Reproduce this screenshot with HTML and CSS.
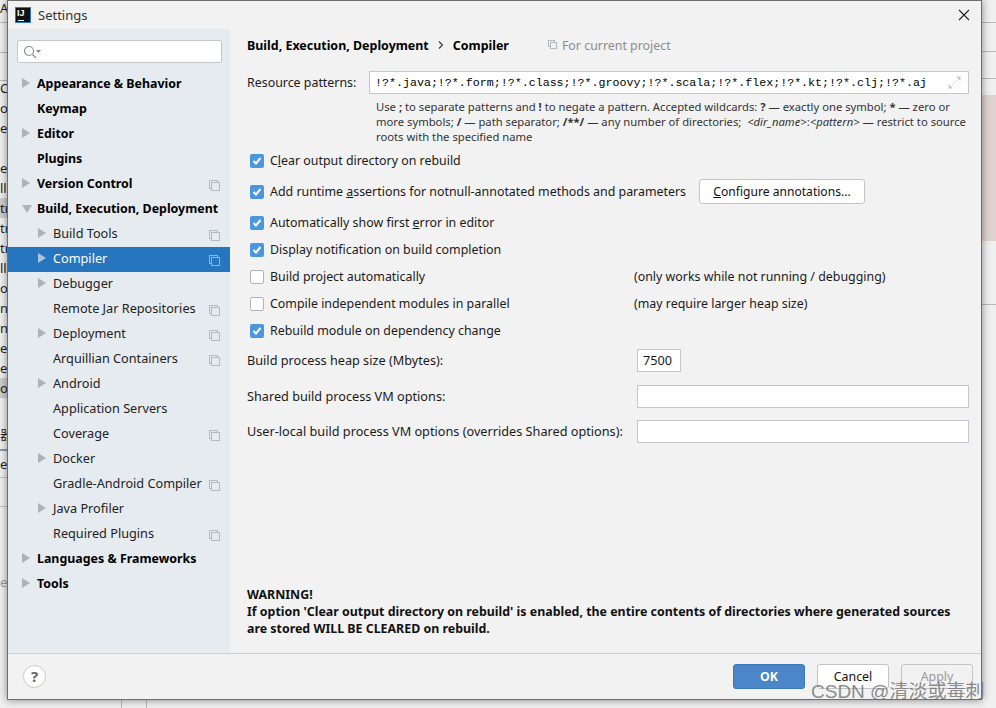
FILE: index.html
```html
<!DOCTYPE html>
<html lang="en">

  <head>
    <meta charset="UTF-8">
    <meta name="viewport" content="width=device-width, initial-scale=1.0">
    <title>Settings</title>

    <link rel="stylesheet" href="styles.css">
  </head>

  <body>

    <!-- the app behind the dialog, only its edges show -->
    <div class="bg-left">
      <span class="bg-row">A</span>
      <span class="bg-row"></span>
      <span class="bg-row"></span>
      <span class="bg-row"></span>
      <span class="bg-row">Co</span>
      <span class="bg-row">o</span>
      <span class="bg-row">er</span>
      <span class="bg-row"></span>
      <span class="bg-row">er</span>
      <span class="bg-row">lle</span>
      <span class="bg-row picked">tr</span>
      <span class="bg-row">tr</span>
      <span class="bg-row">tr</span>
      <span class="bg-row">ll</span>
      <span class="bg-row">o</span>
      <span class="bg-row">n</span>
      <span class="bg-row">nt</span>
      <span class="bg-row">e</span>
      <span class="bg-row">e</span>
      <span class="bg-row picked">o</span>
      <span class="bg-row cn">器</span>
      <span class="bg-row es1">e</span>
      <span class="bg-row es2">es</span>
    </div>
    <div class="bg-right"></div>
    <div class="bg-slot"></div>

    <div class="dialog">

      <header class="titlebar">
        <span class="app-logo">IJ</span>
        <span class="title">Settings</span>
        <svg class="close" width="12" height="12" viewBox="0 0 12 12"><path d="M1 1L11 11M11 1L1 11" stroke="#222" stroke-width="1.1" fill="none"/></svg>
      </header>

      <div class="main">

        <aside class="sidebar">
          <div class="search">
            <svg width="20" height="16" viewBox="0 0 20 16"><circle cx="7" cy="7" r="4.5" fill="none" stroke="#8a8a8a" stroke-width="1.1"/><path d="M10.5 10.5L14 14" stroke="#8a8a8a" stroke-width="1.2"/><path d="M14 6h5l-2.5 3z" fill="#8a8a8a"/></svg>
          </div>
          <ul class="tree">
            <li class="row top"><i class="arrow"></i>Appearance &amp; Behavior</li>
            <li class="row top">Keymap</li>
            <li class="row top"><i class="arrow"></i>Editor</li>
            <li class="row top">Plugins</li>
            <li class="row top copy"><i class="arrow"></i>Version Control</li>
            <li class="row top"><i class="arrow open"></i>Build, Execution, Deployment</li>
            <li class="row sub copy"><i class="arrow"></i>Build Tools</li>
            <li class="row sub copy selected"><i class="arrow"></i>Compiler</li>
            <li class="row sub"><i class="arrow"></i>Debugger</li>
            <li class="row sub copy">Remote Jar Repositories</li>
            <li class="row sub copy"><i class="arrow"></i>Deployment</li>
            <li class="row sub copy">Arquillian Containers</li>
            <li class="row sub"><i class="arrow"></i>Android</li>
            <li class="row sub">Application Servers</li>
            <li class="row sub copy">Coverage</li>
            <li class="row sub"><i class="arrow"></i>Docker</li>
            <li class="row sub copy">Gradle-Android Compiler</li>
            <li class="row sub"><i class="arrow"></i>Java Profiler</li>
            <li class="row sub copy">Required Plugins</li>
            <li class="row top"><i class="arrow"></i>Languages &amp; Frameworks</li>
            <li class="row top"><i class="arrow"></i>Tools</li>
          </ul>
        </aside>

        <section class="content">

          <div class="crumbs">
            <b>Build, Execution, Deployment</b>
            <svg width="6" height="8" viewBox="0 0 6 8"><path d="M1 0.5L4.5 4L1 7.5" stroke="#333" stroke-width="1.1" fill="none"/></svg>
            <b>Compiler</b>
            <span class="scope"><i class="copy-icon"></i>For current project</span>
          </div>

          <div class="patterns">
            <label>Resource patterns:</label>
            <div class="input mono">!?*.java;!?*.form;!?*.class;!?*.groovy;!?*.scala;!?*.flex;!?*.kt;!?*.clj;!?*.aj
              <svg class="expand" width="13" height="13" viewBox="0 0 13 13"><path d="M8 0.5h4.5V5zM0.5 8V12.5H5z" fill="#c4c8cc"/><path d="M9 4L4 9" stroke="#dcdfe2" stroke-width="1"/></svg>
            </div>
          </div>

          <p class="help">Use <b>;</b> to separate patterns and <b>!</b> to negate a pattern. Accepted wildcards: <b>?</b> — exactly one symbol; <b>*</b> — zero or<br>
            more symbols; <b>/</b> — path separator; <b>/**/</b> — any number of directories; &nbsp;<em>&lt;dir_name&gt;</em>:<em>&lt;pattern&gt;</em> — restrict to source<br>
            roots with the specified name</p>

          <div class="check first on"><i class="box"></i><span>C<u>l</u>ear output directory on rebuild</span></div>
          <div class="check tall on"><i class="box"></i><span>Add runtime <u>a</u>ssertions for notnull-annotated methods and parameters</span><button class="btn configure"><u>C</u>onfigure annotations...</button></div>
          <div class="check on"><i class="box"></i><span>Automatically show first <u>e</u>rror in editor</span></div>
          <div class="check on"><i class="box"></i><span>Display notification on build completion</span></div>
          <div class="check"><i class="box"></i><span class="wide">Build project automatically</span><span>(only works while not running / debugging)</span></div>
          <div class="check"><i class="box"></i><span class="wide">Compile independent modules in parallel</span><span>(may require larger heap size)</span></div>
          <div class="check on"><i class="box"></i><span>Rebuild module on dependency change</span></div>

          <div class="field heap"><label>Build process heap size (Mbytes):</label><div class="input short">7500</div></div>
          <div class="field shared"><label>Shared build process VM options:</label><div class="input"></div></div>
          <div class="field"><label>User-local build process VM options (overrides Shared options):</label><div class="input"></div></div>

          <p class="warning">WARNING!<br>
            If option 'Clear output directory on rebuild' is enabled, the entire contents of directories where generated sources<br>
            are stored WILL BE CLEARED on rebuild.</p>

        </section>
      </div>

      <footer class="footer">
        <span class="help-btn">?</span>
        <div class="actions">
          <button class="btn primary">OK</button>
          <button class="btn">Cancel</button>
          <button class="btn disabled">Apply</button>
        </div>
      </footer>
    </div>

    <span class="watermark">CSDN @清淡或毒刺</span>

  </body>

</html>
```

FILE: styles.css
```css
* {
  margin: 0;
  padding: 0;
  box-sizing: border-box;
}

body {
  width: 996px;
  height: 708px;
  overflow: hidden;
  position: relative;
  background: #efefef;
  font-family: "Noto Sans", "Noto Sans CJK SC", sans-serif;
  font-size: 12.4px;
  color: #1a1a1a;
}

/* backdrop strips */

.bg-left {
  position: absolute;
  left: 0;
  top: -2px;
  width: 7px;
  height: 710px;
  overflow: hidden;
  display: flex;
  flex-direction: column;
  background:
    linear-gradient(#b9b9b9, #b9b9b9) 0 24px / 100% 1px no-repeat,
    linear-gradient(#b9b9b9, #b9b9b9) 0 54px / 100% 1px no-repeat,
    linear-gradient(#b9b9b9, #b9b9b9) 0 82px / 100% 1px no-repeat,
    linear-gradient(#8c9bb0, #8c9bb0) 0 451px / 100% 2px no-repeat,
    linear-gradient(#c4c4c4, #c4c4c4) 0 479px / 100% 1px no-repeat,
    linear-gradient(#c4c4c4, #c4c4c4) 0 508px / 100% 1px no-repeat,
    #f0f0f0;
}

.bg-row {
  flex: 0 0 20px;
  line-height: 20px;
  font-size: 13px;
  color: #222;
  white-space: nowrap;
}

.bg-row.picked {
  background: #cdcdcd;
}

.bg-row.cn {
  margin-top: 26px;
}

.bg-row.es1 {
  margin-top: 10px;
}

.bg-row.es2 {
  margin-top: 98px;
  color: #999;
}

.bg-right {
  position: absolute;
  right: 0;
  top: 0;
  width: 14px;
  height: 708px;
  background:
    linear-gradient(#b9b9b9, #b9b9b9) 0 22px / 100% 1px no-repeat,
    linear-gradient(#b9b9b9, #b9b9b9) 0 51px / 100% 1px no-repeat,
    linear-gradient(#b9b9b9, #b9b9b9) 0 78px / 100% 1px no-repeat,
    linear-gradient(#e0d3cf, #e0d3cf) 0 95px / 100% 146px no-repeat,
    linear-gradient(#b9b9b9, #b9b9b9) 0 304px / 100% 1px no-repeat,
    #f0f0f0;
}

.bg-slot {
  position: absolute;
  left: 121px;
  bottom: 0;
  width: 26px;
  height: 8px;
  border-left: 1px solid #b9b9b9;
  border-right: 1px solid #b9b9b9;
}

/* dialog */

.dialog {
  position: absolute;
  left: 7px;
  top: 0;
  width: 975px;
  height: 700px;
  display: flex;
  flex-direction: column;
  background: #f2f2f2;
  border: 1px solid #6e6e6e;
  box-shadow: 0 0 8px rgba(0, 0, 0, 0.45);
}

.titlebar {
  height: 28px;
  display: flex;
  align-items: center;
  padding-left: 7px;
  gap: 7px;
  flex-shrink: 0;
}

.app-logo {
  width: 16px;
  height: 16px;
  background: #111;
  border: 1px solid #2a78c8;
  color: #fff;
  font-family: "Liberation Sans", sans-serif;
  font-size: 9px;
  font-weight: bold;
  line-height: 10px;
  padding-left: 1px;
  position: relative;
}

.app-logo::after {
  content: "";
  position: absolute;
  left: 2px;
  bottom: 1px;
  width: 6px;
  height: 1px;
  background: #fff;
}

.title {
  font-size: 13px;
  color: #333;
}

.close {
  margin-left: auto;
  margin-right: 11px;
}

.main {
  flex: 1;
  display: flex;
  min-height: 0;
}

/* left tree */

.sidebar {
  width: 222px;
  background: #e6ebf0;
  flex-shrink: 0;
  padding-top: 11px;
}

.search {
  width: 205px;
  height: 23px;
  margin-left: 9px;
  background: #fff;
  border: 1px solid #c4c8cc;
  border-radius: 2px;
  padding: 3px 0 0 4px;
}

.tree {
  list-style: none;
  margin-top: 9px;
}

.row {
  height: 25px;
  line-height: 24px;
  position: relative;
  white-space: nowrap;
}

.top {
  padding-left: 29px;
  font-weight: bold;
  color: #000;
}

.sub {
  padding-left: 45px;
  font-size: 12.7px;
  line-height: 23px;
  color: #222;
}

.arrow {
  position: absolute;
  top: 6px;
  border-left: 8px solid #aeb2b6;
  border-top: 5px solid transparent;
  border-bottom: 5px solid transparent;
}

.top .arrow {
  left: 14px;
}

.sub .arrow {
  left: 30px;
}

.arrow.open {
  left: 14px;
  top: 8px;
  border-top: 8px solid #aeb2b6;
  border-left: 5px solid transparent;
  border-right: 5px solid transparent;
  border-bottom: 0;
}

.selected {
  background: #2675bf;
  color: #fff;
}

.selected .arrow {
  border-left-color: #a9c4df;
}

.copy::after,
.copy-icon {
  content: "";
  display: block;
  width: 7px;
  height: 7px;
  border: 1px solid #b4b9bd;
  background: #e6ebf0;
  box-shadow: -2px -2px 0 -1px #e6ebf0, -2px -2px 0 0 #b4b9bd;
}

.copy::after {
  position: absolute;
  right: 10px;
  top: 10px;
}

.selected::after {
  background: #2675bf;
  border-color: #8db5dc;
  box-shadow: -2px -2px 0 -1px #2675bf, -2px -2px 0 0 #8db5dc;
}

/* right pane */

.content {
  flex: 1;
  padding: 4px 12px 0 17px;
  display: flex;
  flex-direction: column;
  min-width: 0;
  color: #1a1a1a;
}

.crumbs {
  display: flex;
  align-items: center;
  height: 24px;
  color: #000;
  gap: 9px;
}

.crumbs b {
  font-size: 12.45px;
}

.scope {
  display: flex;
  align-items: center;
  gap: 5px;
  margin-left: 30px;
  color: #8c8c8c;
}

.copy-icon {
  background: #f2f2f2;
  box-shadow: -2px -2px 0 -1px #f2f2f2, -2px -2px 0 0 #b4b9bd;
  margin-left: 2px;
}

.patterns {
  display: flex;
  align-items: center;
  justify-content: space-between;
  margin-top: 14px;
}

.input {
  height: 23px;
  width: 332px;
  background: #fff;
  border: 1px solid #c4c8cc;
  padding-left: 5px;
  line-height: 21px;
  white-space: nowrap;
}

.mono {
  width: 600px;
  font-family: "Liberation Mono", monospace;
  font-size: 11.65px;
  color: #000;
  position: relative;
}

.expand {
  position: absolute;
  right: 7px;
  top: 4px;
}

.help {
  margin: 5px 0 0 129px;
  font-size: 11.25px;
  line-height: 15px;
  color: #333;
  white-space: nowrap;
}

.check {
  height: 27px;
  display: flex;
  align-items: center;
  padding-left: 3px;
  white-space: nowrap;
}

.check.first {
  margin-top: 3px;
}

.check.tall {
  height: 35px;
}

.box {
  width: 14px;
  height: 14px;
  margin-right: 6px;
  background: #fff;
  border: 1px solid #b4b4b4;
  border-radius: 2px;
  flex-shrink: 0;
}

.on .box {
  border: 0;
  background: #4b96e0 url("data:image/svg+xml,%3Csvg xmlns='http://www.w3.org/2000/svg' width='14' height='14'%3E%3Cpath d='M3.5 7l2.5 2.5 4.5-5.5' stroke='white' stroke-width='2' fill='none'/%3E%3C/svg%3E");
}

.wide {
  width: 364px;
}

.btn {
  height: 25px;
  width: 72px;
  background: #fff;
  border: 1px solid #c4c4c4;
  border-radius: 3px;
  font: inherit;
  color: #111;
}

.configure {
  width: 166px;
  margin-left: 13px;
  font-size: 12.1px;
}

.field {
  display: flex;
  align-items: center;
  justify-content: space-between;
  height: 24px;
  margin-top: 11px;
  font-size: 12.7px;
}

.field.heap {
  margin-top: 4px;
}

.field.shared {
  margin-top: 12px;
}

.short {
  width: 44px;
  margin-right: 288px;
}

.warning {
  margin-top: auto;
  margin-bottom: 16px;
  font-weight: bold;
  line-height: 17px;
  color: #111;
  white-space: nowrap;
}

/* footer */

.footer {
  height: 46px;
  flex-shrink: 0;
  border-top: 1px solid #cfcfcf;
  display: flex;
  align-items: center;
  padding: 0 8px 0 15px;
}

.help-btn {
  width: 23px;
  height: 23px;
  border: 1px solid #c8c8c8;
  border-radius: 50%;
  background: #fff;
  text-align: center;
  line-height: 21px;
  font-size: 15px;
  font-weight: bold;
  color: #666;
}

.actions {
  margin-left: auto;
  display: flex;
  gap: 12px;
}

.primary {
  background: #4a86c8;
  border-color: #3f78b8;
  color: #fff;
  font-weight: bold;
}

.disabled {
  background: #f2f2f2;
  color: #9a9a9a;
}

.watermark {
  position: absolute;
  left: 811px;
  top: 676px;
  font-family: "Liberation Sans", "Noto Sans CJK SC", sans-serif;
  font-size: 19px;
  color: rgba(110, 110, 110, 0.8);
  white-space: nowrap;
}
```
